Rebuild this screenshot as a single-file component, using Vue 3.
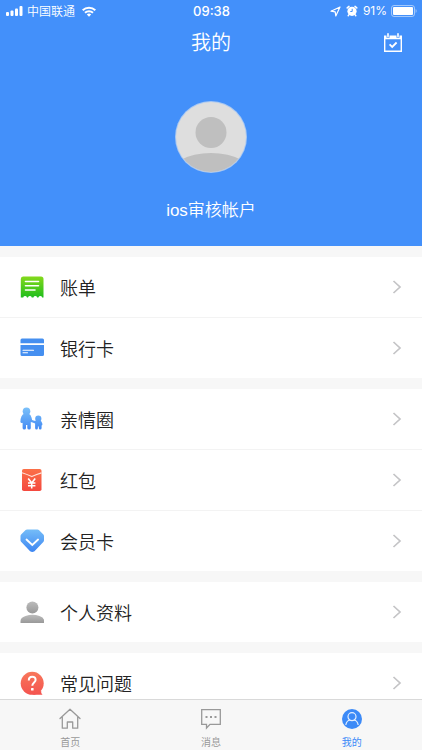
<template>
  <div class="app">
    <header class="header">
      <div class="status">
        <div class="status-side">
          <svg width="17" height="10" viewBox="0 0 17 10" fill="#fff">
            <rect x="0" y="6" width="3" height="4" rx="1" />
            <rect x="4.5" y="4.5" width="3" height="5.5" rx="1" />
            <rect x="9" y="2.5" width="3" height="7.5" rx="1" />
            <rect x="13.5" y="0" width="3" height="10" rx="1" />
          </svg>
          <span>中国联通</span>
          <svg class="wifi" width="14" height="11" viewBox="0 0 14 11" fill="none" stroke="#fff" stroke-width="2">
            <path d="M0.7 4.2a9 9 0 0 1 12.6 0" />
            <path d="M3 6.8a5.8 5.8 0 0 1 8 0" />
            <path d="M7 10.8 4.8 8.6a3.2 3.2 0 0 1 4.4 0z" fill="#fff" stroke="none" />
          </svg>
        </div>
        <span class="time">09:38</span>
        <div class="status-side right">
          <svg width="11" height="11" viewBox="0 0 11 11" fill="none" stroke="#fff" stroke-width="1.2" stroke-linejoin="round">
            <path d="M10 1 1 5.2l4.2.6.6 4.2z" />
          </svg>
          <svg class="alarm" width="12" height="12" viewBox="0 0 12 12">
            <circle cx="6" cy="6.3" r="4.6" fill="#fff" />
            <path d="M1.2 2.9 3 1.4M10.8 2.9 9 1.4M2.8 9.9l-.6.8M9.2 9.9l.6.8" stroke="#fff" stroke-width="1.5" stroke-linecap="round" />
            <path d="M6.2 3.8v2.7H4.3" fill="none" stroke="#4390fa" />
          </svg>
          <span class="percent">91%</span>
          <svg width="26" height="12" viewBox="0 0 26 12">
            <rect x=".5" y=".5" width="23" height="11" rx="2.5" fill="none" stroke="#fff" stroke-opacity=".5" />
            <rect x="2" y="2" width="20" height="8" rx="1" fill="#fff" />
            <path d="M24.6 4v4c1.4-.6 1.4-3.4 0-4z" fill="#fff" fill-opacity=".5" />
          </svg>
        </div>
      </div>

      <div class="navbar">
        <h1>我的</h1>
        <button class="sign-btn" type="button" aria-label="签到">
          <svg width="18" height="19" viewBox="0 0 18 19" fill="none" stroke="#fff">
            <path d="M.7 3.2V18.2H17.3V3.2" stroke-width="1.4" />
            <path d="M0 2.5h2.5v2.2h3V2.5h7v2.2h3V2.5H18V6.2H0z" fill="#fff" stroke="none" />
            <path d="M4 .8v2.8M14 .8v2.8" stroke-width="1.6" stroke-linecap="round" />
            <path d="m5.6 11.4 2.6 2.5 4.4-4.4" stroke-width="1.8" />
          </svg>
        </button>
      </div>

      <div class="profile">
        <svg class="avatar" width="72" height="72" viewBox="0 0 72 72">
          <defs>
            <clipPath id="avatar-clip"><circle cx="36" cy="36" r="35" /></clipPath>
          </defs>
          <circle cx="36" cy="36" r="36" fill="#a9c8f2" />
          <g clip-path="url(#avatar-clip)">
            <rect width="72" height="72" fill="#dedede" />
            <circle cx="36" cy="31.5" r="15.5" fill="#bfbfbf" />
            <ellipse cx="36" cy="76" rx="43" ry="24" fill="#bfbfbf" />
          </g>
        </svg>
        <p class="username">ios审核帐户</p>
      </div>
    </header>

    <main class="content">
      <nav v-for="(group, i) in groups" :key="i" class="group">
        <a v-for="item in group" :key="item.icon" class="row" href="#">
          <svg class="row-icon" width="24" height="24" viewBox="0 0 24 24">
            <template v-if="item.icon === 'bill'">
              <linearGradient id="g-bill" x2="0" y2="1">
                <stop stop-color="#84d91c" />
                <stop offset="1" stop-color="#1fbd1d" />
              </linearGradient>
              <path d="M3 1.5h18q2.5 0 2.5 2.5v18.5h-1.3a2 2 0 0 0-3.8 0h-1.2a2 2 0 0 0-3.8 0h-1.6a2 2 0 0 0-3.8 0H7a2 2 0 0 0-3.8 0H.8V4Q.8 1.5 3 1.5z" fill="url(#g-bill)" />
              <path d="M5.5 6.5h13M5.5 10.7h13M5.5 15h9.5" stroke="#fff" stroke-width="1.6" stroke-linecap="round" />
            </template>
            <template v-else-if="item.icon === 'card'">
              <path d="M2 2.5h20.5q1.5 0 1.5 1.5v3.2H.5V4q0-1.5 1.5-1.5zM.5 9H24v9.5q0 1.5-1.5 1.5H2q-1.5 0-1.5-1.5z" fill="#458ff0" />
              <path d="M3 14.3h10.5M3 16.8h4.5" stroke="#fff" stroke-width="1.1" stroke-linecap="round" />
            </template>
            <template v-else-if="item.icon === 'family'">
              <linearGradient id="g-family" gradientUnits="userSpaceOnUse" x1="0" y1="0" x2="0" y2="23">
                <stop stop-color="#7cc2fa" />
                <stop offset="1" stop-color="#4289f3" />
              </linearGradient>
              <g fill="url(#g-family)">
                <circle cx="6.5" cy="4.2" r="3.8" />
                <path d="M4.5 6.5h4q2.3.8 3.1 4.2l.5 2.3 2.8 1-.5 2-3.6-1V21q0 1.6-1.7 1.6T7.3 21v-3H6v3q0 1.6-1.7 1.6T2.6 21v-5.2q-1.7.6-2.2-.9Q.6 7.700 4.500 6.500z" />
                <circle cx="18.3" cy="11.7" r="3.1" />
                <path d="M16.6 13.5h3.4q1.700.5 2.300 3 .5 1.900-.7 2.100V21q0 1.600-1.400 1.600T18.800 21v-1.500h-.9V21q0 1.600-1.400 1.600T15.100 21v-4.600l-1.600-.6.300-1.800z" />
              </g>
            </template>
            <template v-else-if="item.icon === 'redpack'">
              <linearGradient id="g-red" x2="0" y2="1">
                <stop stop-color="#fb7048" />
                <stop offset="1" stop-color="#f4493f" />
              </linearGradient>
              <rect x="2" y="1" width="19.5" height="22" rx="1.8" fill="url(#g-red)" />
              <path d="M2 4.8q4.5 1.400 9.800 3.700 5-2.300 9.700-3.700" fill="none" stroke="#ffe3db" stroke-width="1.2" />
              <path d="m8.2 10.500 3.500 4.500 3.500-4.500M11.700 14.500v6M8 15h7.400M8 17.700h7.400" fill="none" stroke="#fff" stroke-width="1.600" />
            </template>
            <template v-else-if="item.icon === 'member'">
              <linearGradient id="g-member" x2="0" y2="1">
                <stop stop-color="#75bdf8" />
                <stop offset="1" stop-color="#3e86f2" />
              </linearGradient>
              <path d="M7 .5h10.500q.8 0 1.400.6l4.500 4.500q.6.600.6 1.400v4.200q0 .8-.5 1.500l-9 9.500q-2.200 1.600-4.400 0l-9-9.500q-.6-.7-.6-1.500V7q0-.8.6-1.400l4.500-4.500Q6.200.5 7 .5z" fill="url(#g-member)" />
              <path d="m6.500 10.500 5.800 5.500 5.800-5.500" fill="none" stroke="#fff" stroke-width="1.8" stroke-linecap="round" />
            </template>
            <template v-else-if="item.icon === 'user'">
              <linearGradient id="g-user" x2="0" y2="1">
                <stop stop-color="#bcbcbc" />
                <stop offset="1" stop-color="#999" />
              </linearGradient>
              <circle cx="12.4" cy="7.4" r="6" fill="url(#g-user)" />
              <path d="M.5 23v-2q0-3.300 5-5 7-2.500 14 0 4.700 1.700 4.700 5v2z" fill="url(#g-user)" />
            </template>
            <template v-else>
              <linearGradient id="g-help" gradientUnits="userSpaceOnUse" x1="0" y1="0" x2="0" y2="24">
                <stop stop-color="#f8795c" />
                <stop offset="1" stop-color="#f4534f" />
              </linearGradient>
              <g fill="url(#g-help)">
                <circle cx="12.2" cy="12.3" r="11.5" />
                <path d="M12 23.800h10.500q-1.800-1.600-1.300-4z" />
              </g>
              <path d="M8.800 9.400q0-3.600 3.400-3.600t3.400 3.200c0 2.400-3.300 2.700-3.300 5.700" fill="none" stroke="#fff" stroke-width="2" />
              <rect x="11" y="16.900" width="2.6" height="2.6" rx=".6" fill="#fff" />
            </template>
          </svg>
          <span class="row-label">{{ item.label }}</span>
          <svg class="arrow" width="10" height="14" viewBox="0 0 10 14" fill="none" stroke="#c4c4c6" stroke-width="1.700">
            <path d="m1.500 1 6.500 6-6.500 6" />
          </svg>
        </a>
      </nav>
    </main>

    <nav class="tabbar">
      <a href="#" class="tab">
        <svg width="22" height="22" viewBox="0 0 22 22" fill="none" stroke="#999" stroke-width="1.3" stroke-linejoin="round" stroke-linecap="round">
          <path d="M1 10.500 11 1.300l10 9.200M3.300 9v11.200h5V14h5.400v6.200h5V9" />
        </svg>
        <span>首页</span>
      </a>
      <a href="#" class="tab">
        <svg width="22" height="22" viewBox="0 0 22 22" fill="none" stroke="#999" stroke-width="1.3">
          <path d="M1.700 1.700h18.600v14.600H10L6.500 20v-3.700H1.700z" />
          <path d="M5.500 9h2M10 9h2M14.500 9h2" stroke-width="2" />
        </svg>
        <span>消息</span>
      </a>
      <a href="#" class="tab active">
        <svg width="22" height="22" viewBox="0 0 22 22" fill="none" stroke="#e4efff" stroke-width="1.2">
          <circle cx="11" cy="11" r="10" fill="#3c8af7" stroke="none" />
          <circle cx="11" cy="8.700" r="4" />
          <path d="M4.800 17q.8-4.500 4.200-5M17.200 17q-.8-4.500-4.200-5" />
        </svg>
        <span>我的</span>
      </a>
    </nav>
  </div>
</template>

<script setup>
// Menu entries, one array per block
const groups = [
  [
    { icon: 'bill', label: '账单' },
    { icon: 'card', label: '银行卡' },
  ],
  [
    { icon: 'family', label: '亲情圈' },
    { icon: 'redpack', label: '红包' },
    { icon: 'member', label: '会员卡' },
  ],
  [{ icon: 'user', label: '个人资料' }],
  [{ icon: 'help', label: '常见问题' }],
];
</script>

<style>
body {
  margin: 0;
}
</style>

<style scoped>
.app {
  display: flex;
  flex-direction: column;
  height: 100vh;
  background: #f7f7f7;
  color: #222;
  font-family: "Noto Sans CJK SC", sans-serif;
  font-weight: 350;
}

svg {
  display: block;
  flex: none;
}

a {
  color: inherit;
  text-decoration: none;
}

.header {
  flex: none;
  padding-bottom: 23px;
  background: #4390fa;
  color: #fff;
}

.status {
  display: flex;
  align-items: center;
  height: 22px;
  padding: 0 5px 0 6px;
  font-size: 12px;
  line-height: 22px;
}

.status-side {
  display: flex;
  flex: 1;
  align-items: center;
  gap: 4px;
}

.status-side.right {
  justify-content: flex-end;
}

.wifi {
  margin-left: 3px;
}

.alarm {
  margin: 0 1px;
}

.time,
.percent {
  font-family: Inter, sans-serif;
}

.time {
  font-size: 13px;
  font-weight: 500;
}

.percent {
  font-weight: 400;
}

.navbar {
  display: grid;
  grid-template-columns: 1fr auto 1fr;
  align-items: center;
  height: 40px;
  padding: 0 20px;
}

.navbar h1 {
  grid-column: 2;
  margin: 0;
  font-size: 20px;
  font-weight: inherit;
  line-height: 40px;
}

.sign-btn {
  justify-self: end;
  padding: 0;
  border: none;
  background: transparent;
}

.profile {
  display: flex;
  flex-direction: column;
  align-items: center;
  gap: 25px;
  padding-top: 39px;
}

.username {
  margin: 0;
  font-family: "Liberation Sans", "Noto Sans CJK SC", sans-serif;
  font-size: 17px;
  line-height: 25px;
}

.content {
  flex: 1;
  min-height: 0;
  overflow-y: auto;
  scrollbar-width: none;
}

.group {
  margin-top: 11px;
  background: #fff;
}

.row {
  display: flex;
  align-items: center;
  gap: 16px;
  height: 60px;
  padding: 0 20px;
}

.row + .row {
  border-top: 1px solid #f3f3f3;
}

.row-label {
  flex: 1;
  font-size: 18px;
  line-height: 24px;
}

.tabbar {
  display: flex;
  flex: none;
  border-top: 1px solid #d9d9d9;
  background: #f7f7f7;
}

.tab {
  display: flex;
  flex: 1;
  flex-direction: column;
  align-items: center;
  gap: 4px;
  padding: 8px 0 0;
  color: #999;
  font-size: 10px;
  font-weight: 400;
  line-height: 16px;
}

.tab.active {
  color: #3c8af7;
}
</style>
